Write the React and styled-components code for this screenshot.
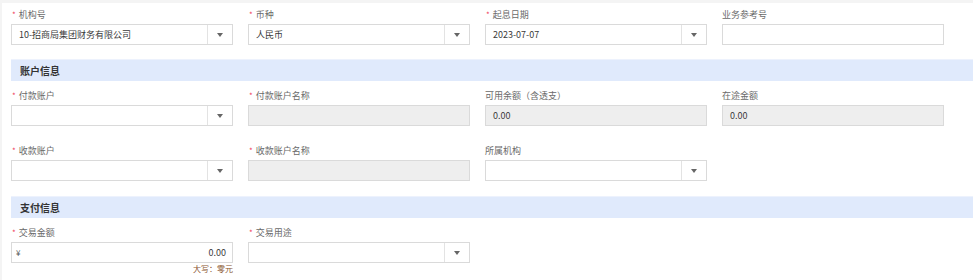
import React from "react";
import styled, { createGlobalStyle } from "styled-components";

const GlobalStyle = createGlobalStyle`
  html, body {
    margin: 0;
    padding: 0;
    background: #f4f4f4;
    font-family: "Noto Sans CJK SC", "Noto Sans", sans-serif;
  }
`;

const Page = styled.div`
  padding: 3px 0 0 2px;
  height: 277px;
  overflow: hidden;
`;

const Panel = styled.div`
  background: #fff;
  height: 100%;
  padding: 2px 0 0 9px;
`;

const Row = styled.div`
  display: grid;
  grid-template-columns: repeat(4, 222px);
  column-gap: 15px;
  margin-bottom: ${(p) => (p.$tight ? "14px" : "15px")};
`;

const Item = styled.div`
  display: flex;
  flex-direction: column;
`;

const Label = styled.div`
  height: 19px;
  line-height: 19px;
  font-size: 9px;
  color: #6a6a6a;
  padding-left: ${(p) => (p.$required ? "1px" : "0")};
  white-space: nowrap;
`;

const Star = styled.span`
  color: #f0405a;
  font-size: 8px;
  margin-right: 3px;
`;

const Box = styled.div`
  box-sizing: border-box;
  height: 21px;
  border: 1px solid #dadada;
  background: ${(p) => (p.$disabled ? "#eeeeee" : "#fff")};
  display: flex;
  align-items: center;
  font-size: 9px;
  color: #3a3a3a;
`;

const Value = styled.div`
  flex: 1;
  padding: 0 6px 0 7px;
  text-align: ${(p) => (p.$right ? "right" : "left")};
  white-space: nowrap;
  overflow: hidden;
`;

const Prefix = styled.span`
  padding-left: 4px;
  color: #555;
  font-size: 8px;
`;

const Toggle = styled.div`
  width: 24px;
  height: 100%;
  border-left: 1px solid #e3e3e3;
  display: flex;
  align-items: center;
  justify-content: center;

  &::after {
    content: "";
    border-left: 3.5px solid transparent;
    border-right: 3.5px solid transparent;
    border-top: 4px solid #666;
  }
`;

const Note = styled.div`
  height: 12px;
  line-height: 12px;
  font-size: 8px;
  color: #8a5530;
  text-align: right;
`;

const Section = styled.div`
  height: 22px;
  line-height: 22px;
  background: #e0eafc;
  border-top: 1px solid #edf2fd;
  box-sizing: border-box;
  padding-left: 9px;
  font-size: 10px;
  font-weight: bold;
  color: #333;
  margin-bottom: 5px;
`;

function Field({ label, required, value, select, disabled, right, prefix, note }) {
  return (
    <Item>
      <Label $required={required}>
        {required && <Star>*</Star>}
        {label}
      </Label>
      <Box $disabled={disabled}>
        {prefix && <Prefix>{prefix}</Prefix>}
        <Value $right={right}>{value}</Value>
        {select && <Toggle />}
      </Box>
      {note && <Note>{note}</Note>}
    </Item>
  );
}

export default function App() {
  return (
    <>
      <GlobalStyle />
      <Page>
        <Panel>
          <Row $tight>
            <Field label="机构号" required select value="10-招商局集团财务有限公司" />
            <Field label="币种" required select value="人民币" />
            <Field label="起息日期" required select value="2023-07-07" />
            <Field label="业务参考号" />
          </Row>
          <Section>账户信息</Section>
          <Row>
            <Field label="付款账户" required select />
            <Field label="付款账户名称" required disabled />
            <Field label="可用余额（含透支）" disabled value="0.00" />
            <Field label="在途金额" disabled value="0.00" />
          </Row>
          <Row>
            <Field label="收款账户" required select />
            <Field label="收款账户名称" required disabled />
            <Field label="所属机构" select />
          </Row>
          <Section>支付信息</Section>
          <Row>
            <Field label="交易金额" required prefix="¥" right value="0.00" note="大写：零元" />
            <Field label="交易用途" required select />
          </Row>
        </Panel>
      </Page>
    </>
  );
}
